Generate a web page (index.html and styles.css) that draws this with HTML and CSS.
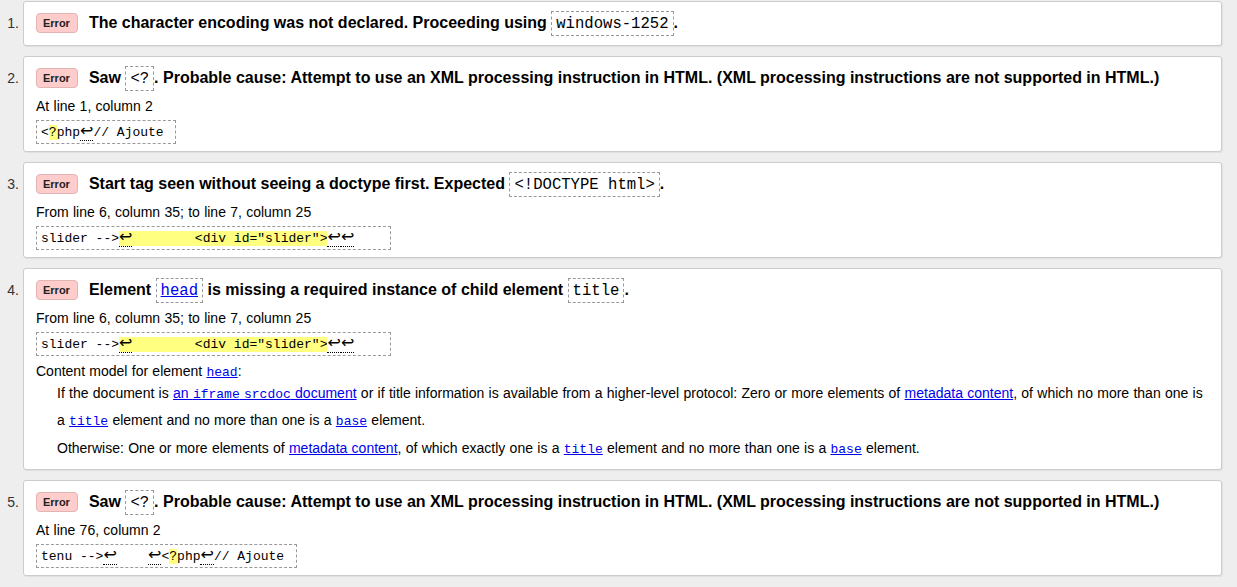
FILE: index.html
```html
<!DOCTYPE html>
<html lang="en">
<head>
<meta charset="utf-8">
<title>Validation results</title>
<link rel="stylesheet" href="styles.css">
</head>
<body>
<ol class="results">
  <li class="result">
    <span class="num">1.</span>
    <div class="card">
      <p class="msg"><span class="badge">Error</span>The character encoding was not declared. Proceeding using <code class="code">windows-1252</code>.</p>
    </div>
  </li>
  <li class="result">
    <span class="num">2.</span>
    <div class="card">
      <p class="msg"><span class="badge">Error</span>Saw <code class="code">&lt;?</code>. Probable cause: Attempt to use an XML processing instruction in HTML. (XML processing instructions are not supported in HTML.)</p>
      <p class="location">At line 1, column 2</p>
      <p class="extract-row"><code class="extract">&lt;<mark>?</mark>php<b class="lf" title="Line break">↩</b>// Ajoute </code></p>
    </div>
  </li>
  <li class="result">
    <span class="num">3.</span>
    <div class="card">
      <p class="msg"><span class="badge">Error</span>Start tag seen without seeing a doctype first. Expected <code class="code">&lt;!DOCTYPE html&gt;</code>.</p>
      <p class="location">From line 6, column 35; to line 7, column 25</p>
      <p class="extract-row"><code class="extract">slider --&gt;<mark><b class="lf" title="Line break">↩</b>        &lt;div id="slider"&gt;</mark><b class="lf" title="Line break">↩</b><b class="lf" title="Line break">↩</b>    </code></p>
    </div>
  </li>
  <li class="result">
    <span class="num">4.</span>
    <div class="card">
      <p class="msg"><span class="badge">Error</span>Element <code class="code"><a href="#head">head</a></code> is missing a required instance of child element <code class="code">title</code>.</p>
      <p class="location">From line 6, column 35; to line 7, column 25</p>
      <p class="extract-row"><code class="extract">slider --&gt;<mark><b class="lf" title="Line break">↩</b>        &lt;div id="slider"&gt;</mark><b class="lf" title="Line break">↩</b><b class="lf" title="Line break">↩</b>    </code></p>
      <div class="details">
        <p class="details-title">Content model for element <a href="#head"><code class="ref">head</code></a>:</p>
        <div class="details-body">
          <p>If the document is <a href="#srcdoc">an <code class="ref">iframe</code> <code class="ref">srcdoc</code> document</a> or if title information is available from a higher-level protocol: Zero or more elements of <a href="#meta">metadata content</a>, of which no more than one is a <a href="#title"><code class="ref">title</code></a> element and no more than one is a <a href="#base"><code class="ref">base</code></a> element.</p>
          <p>Otherwise: One or more elements of <a href="#meta">metadata content</a>, of which exactly one is a <a href="#title"><code class="ref">title</code></a> element and no more than one is a <a href="#base"><code class="ref">base</code></a> element.</p>
        </div>
      </div>
    </div>
  </li>
  <li class="result">
    <span class="num">5.</span>
    <div class="card">
      <p class="msg"><span class="badge">Error</span>Saw <code class="code">&lt;?</code>. Probable cause: Attempt to use an XML processing instruction in HTML. (XML processing instructions are not supported in HTML.)</p>
      <p class="location">At line 76, column 2</p>
      <p class="extract-row"><code class="extract">tenu --&gt;<b class="lf" title="Line break">↩</b>    <b class="lf" title="Line break">↩</b>&lt;<mark>?</mark>php<b class="lf" title="Line break">↩</b>// Ajoute </code></p>
    </div>
  </li>
</ol>
</body>
</html>
```

FILE: styles.css
```css
html, body {
  margin: 0;
  padding: 0;
}

body {
  background: #eeeeee;
  color: #000;
  font-family: "Liberation Sans", Arial, sans-serif;
  font-size: 14px;
}

p {
  margin: 0;
}

a {
  color: #0000ee;
  text-decoration: underline;
}

.results {
  list-style: none;
  margin: 0;
  padding: 1px 15px 12px 0;
  display: flex;
  flex-direction: column;
  gap: 10px;
}

.result {
  display: flex;
  align-items: baseline;
}

.num {
  flex: 0 0 23px;
  box-sizing: border-box;
  padding-right: 4px;
  text-align: right;
  font-size: 14px;
  color: #333;
}

.card {
  flex: 1 1 auto;
  min-width: 0;
  background: #fff;
  border: 1px solid #cccccc;
  border-radius: 3px;
  box-shadow: 1px 1px 1px rgba(0, 0, 0, 0.06);
  padding: 8px 12px 7px 12px;
}

.msg {
  font-size: 16px;
  font-weight: bold;
  line-height: 26px;
}

.msg:only-child {
  margin-bottom: 2px;
}

.badge {
  display: inline-block;
  vertical-align: 1px;
  box-sizing: border-box;
  height: 20px;
  line-height: 18px;
  padding: 0 7px 0 6px;
  margin-right: 11px;
  background: #ffcccc;
  border: 1px solid #e3b4b4;
  border-radius: 4px;
  font-family: "Liberation Sans", Arial, sans-serif;
  font-size: 11px;
  font-weight: bold;
  color: #222;
}

.code {
  font-family: "Liberation Mono", "Courier New", monospace;
  font-size: 15.6px;
  font-weight: normal;
  line-height: 1;
  border: 1px dashed #999;
  padding: 3px 4px 2px;
}

.location {
  margin-top: 6px;
  line-height: 18px;
  word-spacing: 0.4px;
}

.extract-row {
  margin-top: 5px;
  line-height: 0;
}

.extract {
  display: inline-block;
  font-family: "Liberation Mono", "Courier New", monospace;
  font-size: 13px;
  line-height: 17px;
  white-space: pre;
  border: 1px dashed #999;
  padding: 2px 4px;
}

.extract mark {
  background: #ffff80;
  color: inherit;
}

.lf {
  font-family: "DejaVu Sans", sans-serif;
  font-weight: normal;
  font-size: 16px;
  line-height: 1;
  border-bottom: 1px dotted #000;
}

.details {
  margin-top: 6px;
  word-spacing: 0.4px;
}

.details-title {
  line-height: 18px;
}

.details-body {
  padding-left: 21px;
}

.details-body p {
  line-height: 27.3px;
}

.ref {
  font-family: "Liberation Mono", "Courier New", monospace;
  font-size: 13px;
  line-height: 1;
  word-spacing: 0;
}
```
